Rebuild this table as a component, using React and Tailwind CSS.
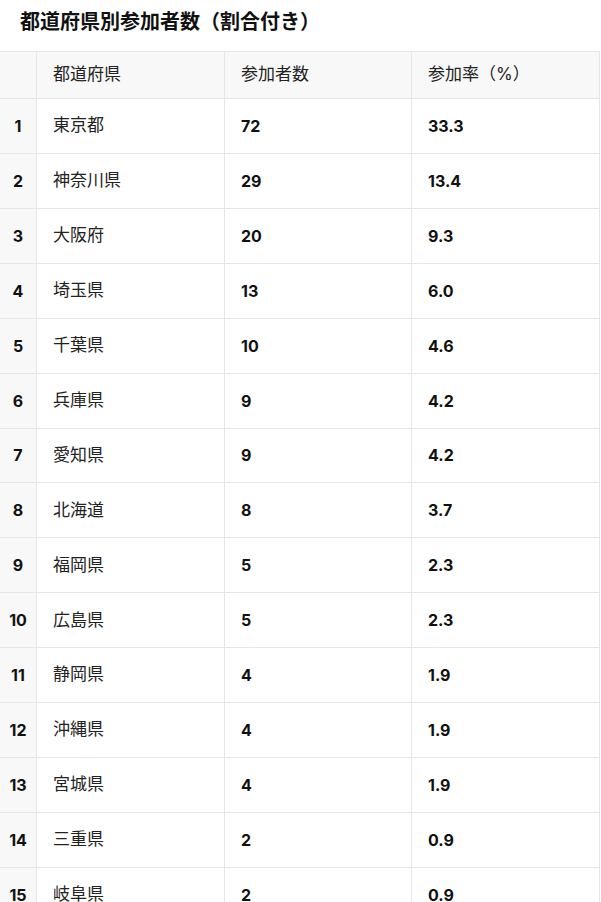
const rows = [
  [1, "東京都", 72, "33.3"],
  [2, "神奈川県", 29, "13.4"],
  [3, "大阪府", 20, "9.3"],
  [4, "埼玉県", 13, "6.0"],
  [5, "千葉県", 10, "4.6"],
  [6, "兵庫県", 9, "4.2"],
  [7, "愛知県", 9, "4.2"],
  [8, "北海道", 8, "3.7"],
  [9, "福岡県", 5, "2.3"],
  [10, "広島県", 5, "2.3"],
  [11, "静岡県", 4, "1.9"],
  [12, "沖縄県", 4, "1.9"],
  [13, "宮城県", 4, "1.9"],
  [14, "三重県", 2, "0.9"],
  [15, "岐阜県", 2, "0.9"],
  [16, "京都府", 2, "0.9"],
];

const font = { fontFamily: 'Inter, "Noto Sans CJK JP", sans-serif' };

export default function App() {
  return (
    <div className="bg-white text-[#1a1a1a] w-[601px] h-[902px] overflow-hidden" style={font}>
      <h1 className="px-5 pt-[7px] pb-[14px] text-[20px] leading-[30px] font-bold text-[#111]">
        都道府県別参加者数（割合付き）
      </h1>
      <div className="w-[600px] border-t border-r border-[#e6e6e6]">
        <div className="grid grid-cols-[37px_188px_187px_187px] h-[47px] bg-[#f8f8f8] border-b border-[#e6e6e6] text-[17px] text-[#222]">
          <div className="border-r border-[#e6e6e6]"></div>
          <div className="border-r border-[#e6e6e6] px-4 flex items-center">都道府県</div>
          <div className="border-r border-[#e6e6e6] px-4 flex items-center">参加者数</div>
          <div className="px-4 flex items-center">参加率（%）</div>
        </div>
        {rows.map(([i, name, n, p]) => (
          <div key={i} className="grid grid-cols-[37px_188px_187px_187px] h-[54.93px] border-b border-[#e6e6e6] text-[16px]">
            <div className="bg-[#f8f8f8] border-r border-[#e6e6e6] flex items-center justify-center font-bold text-[#111]">{i}</div>
            <div className="border-r border-[#e6e6e6] px-4 flex items-center text-[17px] text-[#222]">{name}</div>
            <div className="border-r border-[#e6e6e6] px-4 flex items-center font-bold text-[#111]">{n}</div>
            <div className="px-4 flex items-center font-bold text-[#111]">{p}</div>
          </div>
        ))}
      </div>
    </div>
  );
}
